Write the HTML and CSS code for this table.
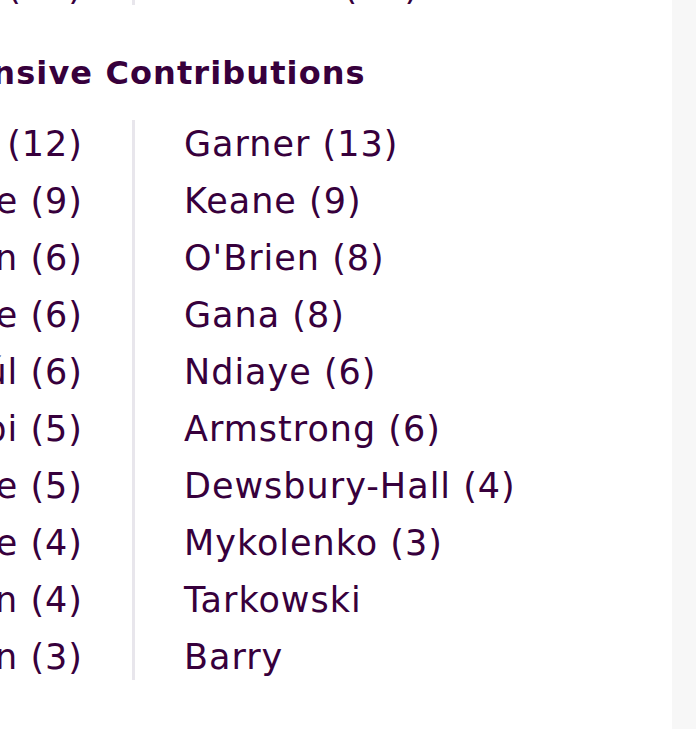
FILE: index.html
```html
<!DOCTYPE html>
<html lang="en">
<head>
<meta charset="utf-8">
<title>Defensive Contributions</title>
<link rel="stylesheet" href="styles.css">
</head>
<body>
<div class="page">
  <main class="main">
    <div class="stats stats--prev">
      <div class="col col--home">
        <div class="row">Robinson (10)</div>
      </div>
      <div class="divider"></div>
      <div class="col col--away">
        <div class="row">Pickford (10)</div>
      </div>
    </div>

    <h2 class="title">Defensive Contributions</h2>

    <div class="stats">
      <div class="col col--home">
        <div class="row">Andersen (12)</div>
        <div class="row">Berge (9)</div>
        <div class="row">Robinson (6)</div>
        <div class="row">Tete (6)</div>
        <div class="row">Raúl (6)</div>
        <div class="row">Iwobi (5)</div>
        <div class="row">Castagne (5)</div>
        <div class="row">Smith Rowe (4)</div>
        <div class="row">Sessegnon (4)</div>
        <div class="row">Wilson (3)</div>
      </div>
      <div class="divider"></div>
      <div class="col col--away">
        <div class="row">Garner (13)</div>
        <div class="row">Keane (9)</div>
        <div class="row">O'Brien (8)</div>
        <div class="row">Gana (8)</div>
        <div class="row">Ndiaye (6)</div>
        <div class="row">Armstrong (6)</div>
        <div class="row">Dewsbury-Hall (4)</div>
        <div class="row">Mykolenko (3)</div>
        <div class="row">Tarkowski</div>
        <div class="row">Barry</div>
      </div>
    </div>
  </main>
  <aside class="rail"></aside>
</div>
</body>
</html>
```

FILE: styles.css
```css
html, body {
  margin: 0;
  padding: 0;
  background: #ffffff;
}

body {
  font-family: "DejaVu Sans", "Noto Sans", sans-serif;
  color: #37003c;
}

.page {
  display: flex;
  height: 729px;
  overflow: hidden;
}

.main {
  flex: 1;
  overflow: hidden;
  background: #ffffff;
}

.rail {
  width: 24px;
  flex: none;
  background: #f7f7f7;
}

.stats {
  display: grid;
  grid-template-columns: 420px 3px 330px;
  margin-left: -288px;
  width: 753px;
}

.stats--prev {
  margin-top: -41px;
}

.col--home {
  text-align: right;
  padding-right: 50px;
  white-space: nowrap;
}

.col--away {
  padding-left: 49px;
  white-space: nowrap;
}

.row {
  font-size: 35px;
  line-height: 57px;
  font-weight: 400;
  letter-spacing: 1px;
}

.col--home .row {
  margin-right: -1px;
}

.divider {
  background: #e8e6ec;
  margin: 4px 0 6px;
}

.stats--prev .divider {
  margin-bottom: 11px;
}

.title {
  margin: 39px 0 25px -96px;
  font-size: 32px;
  line-height: 36px;
  font-weight: 700;
  letter-spacing: 1.1px;
  white-space: nowrap;
}
```
